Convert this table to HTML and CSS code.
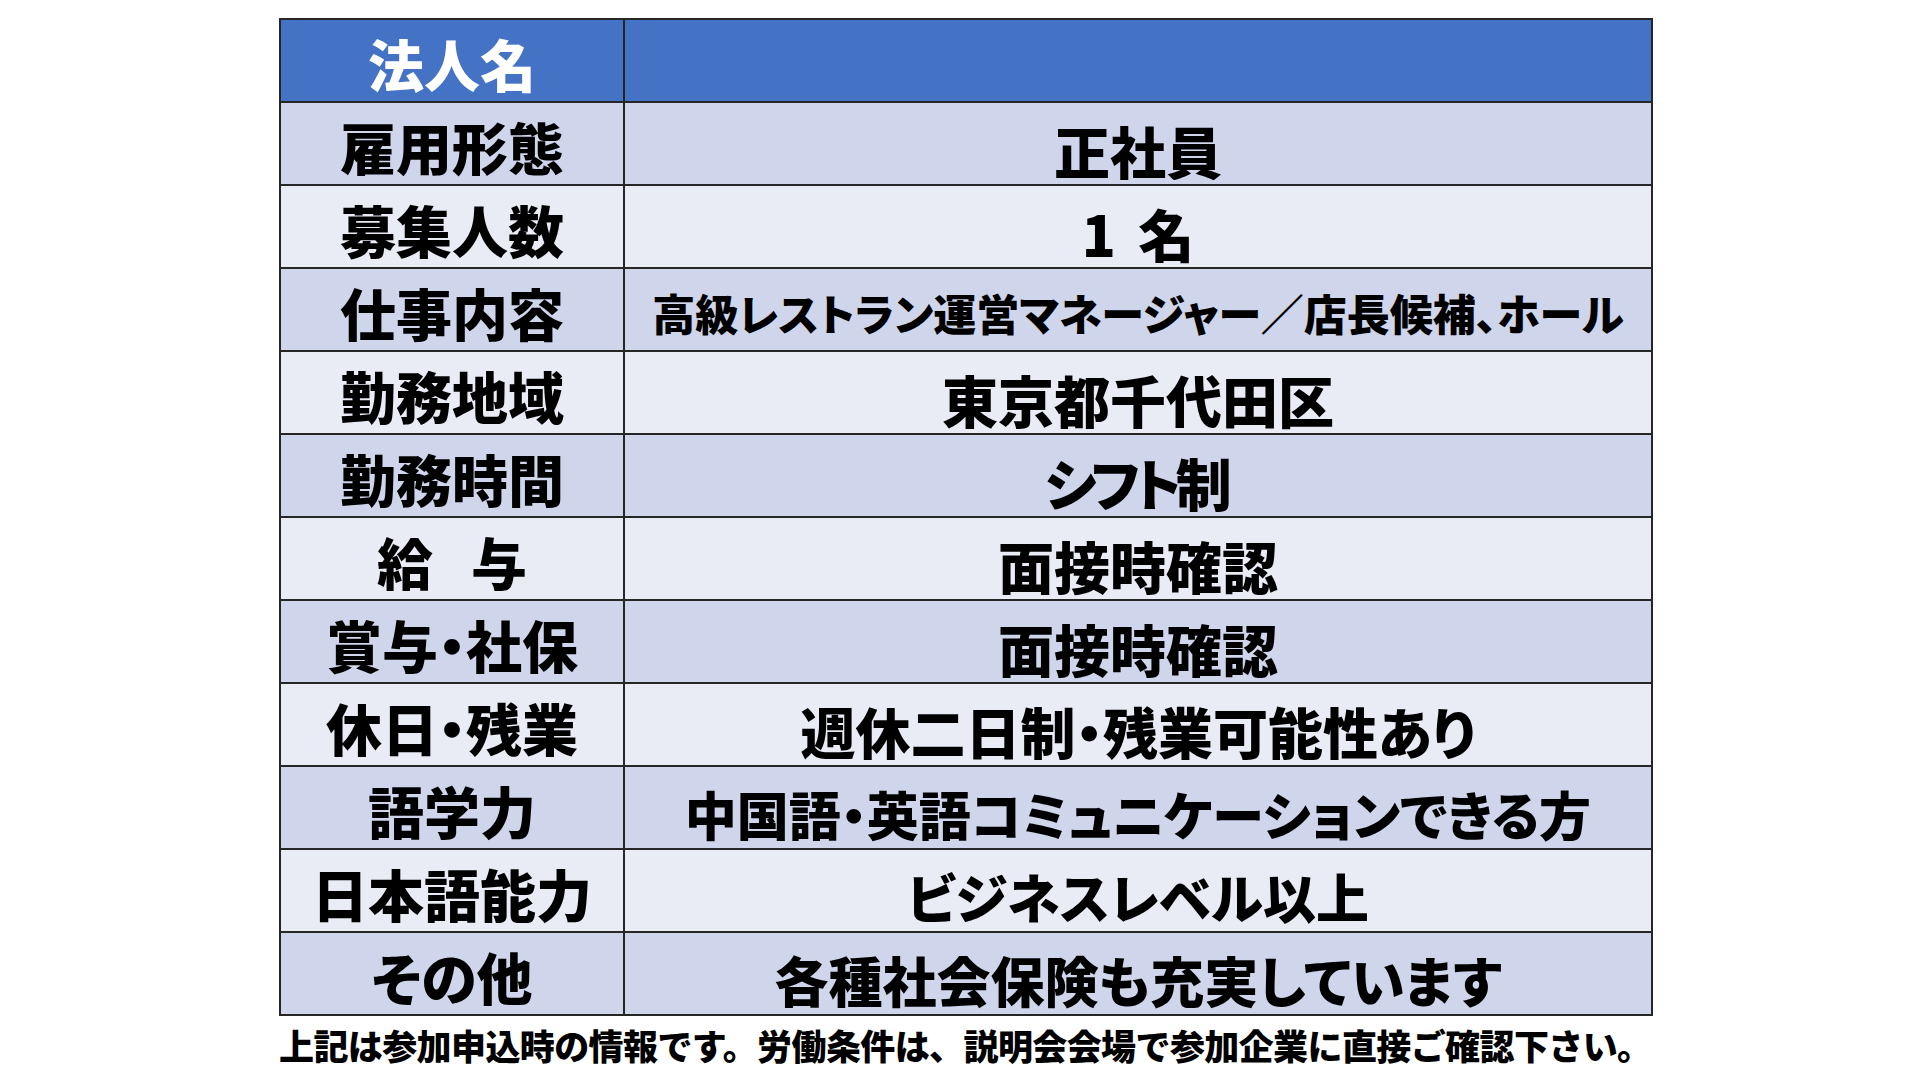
FILE: index.html
```html
<!DOCTYPE html>
<html lang="ja">
<head>
<meta charset="utf-8">
<title>募集要項</title>
<link rel="stylesheet" href="styles.css">
</head>
<body>
<div class="page">
  <table class="info">
    <tr class="head">
      <th class="label">法人名</th>
      <td class="value"></td>
    </tr>
    <tr class="odd">
      <th class="label">雇用形態</th>
      <td class="value">正社員</td>
    </tr>
    <tr class="even">
      <th class="label">募集人数</th>
      <td class="value">1<span class="gap"> </span>名</td>
    </tr>
    <tr class="odd">
      <th class="label">仕事内容</th>
      <td class="value small">高級レストラン運営マネージャー／店長候補、ホール</td>
    </tr>
    <tr class="even">
      <th class="label">勤務地域</th>
      <td class="value">東京都千代田区</td>
    </tr>
    <tr class="odd">
      <th class="label">勤務時間</th>
      <td class="value tight">シフト制</td>
    </tr>
    <tr class="even">
      <th class="label">給<span class="sp">　</span>与</th>
      <td class="value">面接時確認</td>
    </tr>
    <tr class="odd">
      <th class="label">賞与・社保</th>
      <td class="value">面接時確認</td>
    </tr>
    <tr class="even">
      <th class="label">休日・残業</th>
      <td class="value v55">週休二日制・残業可能性あり</td>
    </tr>
    <tr class="odd">
      <th class="label">語学力</th>
      <td class="value v52">中国語・英語コミュニケーションできる方</td>
    </tr>
    <tr class="even">
      <th class="label">日本語能力</th>
      <td class="value v53">ビジネスレベル以上</td>
    </tr>
    <tr class="odd">
      <th class="label">その他</th>
      <td class="value v54">各種社会保険も充実しています</td>
    </tr>
  </table>
  <p class="note">上記は参加申込時の情報です。労働条件は、説明会会場で参加企業に直接ご確認下さい。</p>
</div>
</body>
</html>
```
FILE: styles.css
```css
html, body {
  margin: 0;
  padding: 0;
  background: #ffffff;
}

body {
  width: 1920px;
  height: 1080px;
  overflow: hidden;
  font-family: "Noto Sans CJK JP", "Noto Sans", sans-serif;
  color: #000000;
}

.page {
  padding: 18px 0 0 279px;
}

.info {
  border-collapse: collapse;
  width: 1374px;
  table-layout: fixed;
}

.info tr {
  height: 83px;
}

.info th,
.info td {
  border: 2px solid #262626;
  padding: 0;
  text-align: center;
  vertical-align: middle;
  font-weight: 900;
  font-feature-settings: "palt" 1;
  white-space: nowrap;
  line-height: 1;
}

.info .label {
  width: 342px;
  font-size: 56px;
  padding-top: 4px;
}

.info .value {
  font-size: 56px;
  padding-top: 12px;
}

.info .value.small {
  font-size: 43px;
  padding-top: 6px;
}

.info .value.v55 {
  font-size: 55px;
}

.info .value.v54 {
  font-size: 54px;
}

.info .value.v52 {
  font-size: 52px;
}

.info .value.v53 {
  font-size: 53px;
}

.info .value.tight {
  letter-spacing: -0.1em;
  text-indent: -0.1em;
}

.gap {
  display: inline-block;
  width: 0.4em;
}

.sp {
  letter-spacing: -18px;
}

.head th,
.head td {
  background: #4472c4;
  color: #ffffff;
}

.odd th,
.odd td {
  background: #cfd5ea;
}

.even th,
.even td {
  background: #e9ebf5;
}

.note {
  margin: 8px 0 0 0;
  font-size: 35px;
  font-weight: 900;
  line-height: 1.2;
  letter-spacing: -0.6px;
  white-space: nowrap;
}
```
